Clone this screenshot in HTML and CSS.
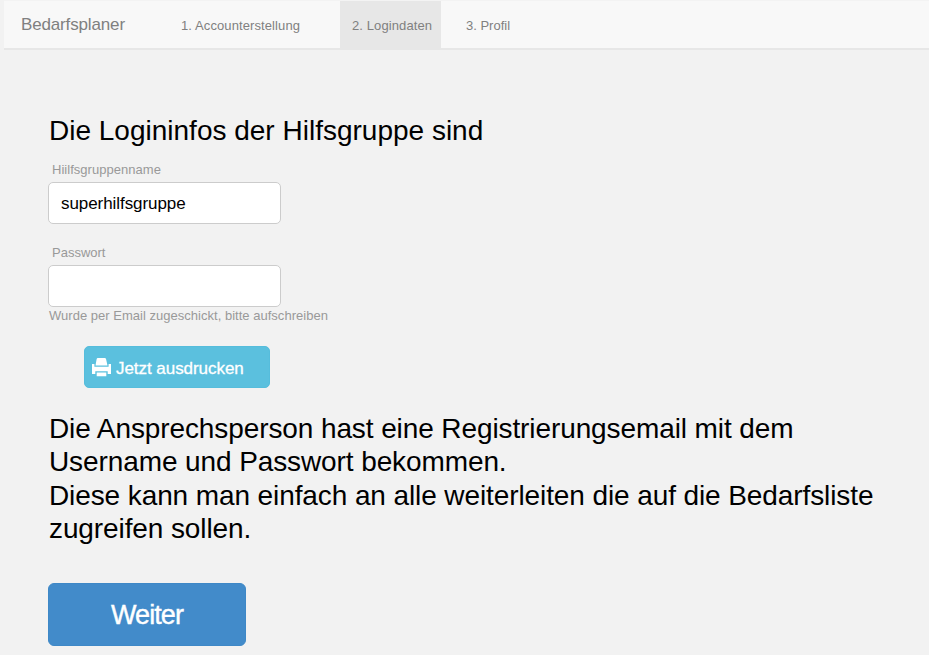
FILE: index.html
```html
<!DOCTYPE html>
<html lang="de">
<head>
<meta charset="utf-8">
<title>Bedarfsplaner</title>
<link rel="stylesheet" href="styles.css">
</head>
<body>
<nav class="navbar">
  <span class="brand">Bedarfsplaner</span>
  <span class="step step-one">1. Accounterstellung</span>
  <span class="step active">2. Logindaten</span>
  <span class="step step-three">3. Profil</span>
</nav>
<main class="content">
  <h1 class="title">Die Logininfos der Hilfsgruppe sind</h1>
  <label class="label wide" for="name">Hiilfsgruppenname</label>
  <input class="field" id="name" type="text" value="superhilfsgruppe">
  <label class="label second" for="password">Passwort</label>
  <input class="field" id="password" type="text">
  <p class="help">Wurde per Email zugeschickt, bitte aufschreiben</p>
  <button class="print">
    <svg class="icon" viewBox="0 0 19 19"><path fill="#fff" d="M5.800 0h7q1 0 1.300 1.200L15.500 7.500h-12L4.600 1.200Q4.900 0 5.800 0zM0 6h2.400v2.700h14.200V6H19v10h-3.300v-2.700H3.300V16H0zM4.700 14.500h9.600v3.800H4.700z"/></svg>
    <span>Jetzt ausdrucken</span>
  </button>
  <p class="info">Die Ansprechsperson hast eine Registrierungsemail mit dem<br>Username und Passwort bekommen.<br>Diese kann man einfach an alle weiterleiten die auf die Bedarfsliste<br>zugreifen sollen.</p>
  <button class="next">Weiter</button>
</main>
</body>
</html>
```
FILE: styles.css
```css
* { box-sizing: border-box; }
body { margin: 0; height: 655px; overflow: hidden; background: #f2f2f2; color: #000; font-family: "Liberation Sans", Arial, sans-serif; }
.navbar { display: flex; height: 50px; margin-left: 4px; background: #f8f8f8; border-top: 1px solid #f3f3f3; border-bottom: 2px solid #e7e7e7; color: #808080; white-space: nowrap; }
.brand { width: 177px; padding-left: 17px; font-size: 17px; letter-spacing: -0.15px; line-height: 47px; }
.step { font-size: 13px; line-height: 49px; letter-spacing: 0.1px; }
.step-one { width: 159px; }
.active { width: 101px; height: 47px; padding-left: 12px; background: #e7e7e7; }
.step-three { padding-left: 25px; letter-spacing: 0; }
.content { padding: 64px 48px 0; }
.title { margin: 0 0 13px 1px; font-size: 28px; font-weight: 400; line-height: 33px; }
.label { display: block; height: 22px; margin-left: 4px; color: #999; font-size: 13px; line-height: 19px; }
.wide { letter-spacing: 0.03px; }
.field { display: block; width: 233px; height: 42px; padding: 2px 12px 0; border: 1px solid #ccc; border-radius: 5px; background: #fff; font: 17px "Liberation Sans", Arial, sans-serif; letter-spacing: -0.07px; }
.second { margin-top: 19px; }
.help { margin: 0 0 0 1px; height: 39px; color: #999; font-size: 13px; line-height: 18px; letter-spacing: 0.02px; }
.print { display: flex; align-items: center; gap: 5px; width: 186px; height: 42px; margin-left: 36px; padding: 3px 7px 0; border: 1px solid #56bddc; border-radius: 5px; background: #5bc0de; color: #fff; font: 17px "Liberation Sans", Arial, sans-serif; letter-spacing: -0.05px; -webkit-text-stroke: 0.3px #fff; white-space: nowrap; }
.icon { width: 19px; height: 19px; margin-top: -2px; }
.info { margin: 24px 0 38px 1px; font-size: 28px; line-height: 33.3px; letter-spacing: -0.1px; white-space: nowrap; }
.next { display: block; width: 198px; height: 63px; padding: 2px 0 0; border: 1px solid #3e88c7; border-radius: 6px; background: #428bca; color: #fff; font: 27px "Liberation Sans", Arial, sans-serif; letter-spacing: -0.9px; -webkit-text-stroke: 0.4px #fff; }
```
